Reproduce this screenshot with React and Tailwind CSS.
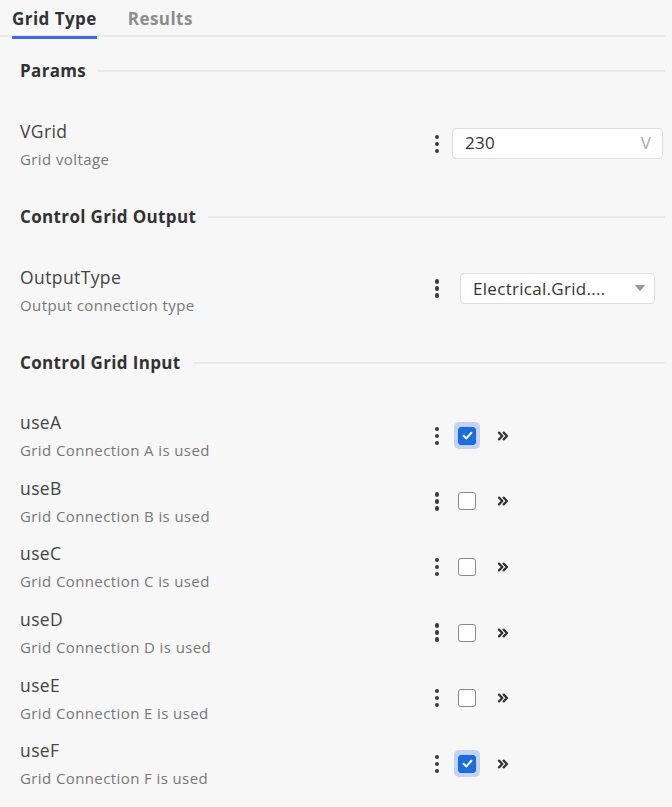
import React from 'react';
import { ChevronsRight } from 'lucide-react';

const font = { fontFamily: '"Open Sans", "Noto Sans", sans-serif' };

function Kebab() {
  return (
    <div className="flex w-[16px] flex-col items-center gap-[2.5px]">
      <span className="h-[4.5px] w-[4.5px] rounded-full bg-[#3d3d3d]" />
      <span className="h-[4.5px] w-[4.5px] rounded-full bg-[#3d3d3d]" />
      <span className="h-[4.5px] w-[4.5px] rounded-full bg-[#3d3d3d]" />
    </div>
  );
}

function SectionHeader({ title }) {
  return (
    <div className="flex h-[24px] items-center gap-[12px]">
      <span className="text-[17px] font-bold tracking-[0.35px] text-[#333]">{title}</span>
      <div className="h-[2px] flex-1 bg-[#e9e9e9]" />
    </div>
  );
}

function Label({ name, desc }) {
  return (
    <div className="flex flex-1 flex-col">
      <span className="text-[17.5px] leading-[22px] tracking-[0.4px] text-[#444]">{name}</span>
      <span className="mt-[7px] text-[15px] leading-[20px] tracking-[0.4px] text-[#777]">{desc}</span>
    </div>
  );
}

function Checkbox({ checked }) {
  if (checked) {
    return (
      <div className="flex h-[27px] w-[26px] items-center justify-center rounded-[5px] bg-[#c3d3fb]">
        <div className="flex h-[18px] w-[18px] items-center justify-center rounded-[3px] border border-[#1f66d1] bg-[#1a6fdd]">
          <svg viewBox="0 0 16 16" className="h-[13px] w-[13px]">
            <path d="M3.2 8.4 L6.6 11.6 L12.8 4.6" fill="none" stroke="white" strokeWidth="2.4" strokeLinecap="round" strokeLinejoin="round" />
          </svg>
        </div>
      </div>
    );
  }
  return (
    <div className="flex h-[27px] w-[26px] items-center justify-center">
      <div className="h-[18px] w-[18px] rounded-[3px] border-[1.5px] border-[#8a8a8a] bg-white" />
    </div>
  );
}

const inputs = [
  { name: 'useA', checked: true },
  { name: 'useB', checked: false },
  { name: 'useC', checked: false },
  { name: 'useD', checked: false },
  { name: 'useE', checked: false },
  { name: 'useF', checked: true },
];

export default function App() {
  return (
    <div className="min-h-[807px] w-[672px] bg-[#f7f7f7]" style={font}>
      <div className="relative mr-[7px] flex h-[37px] items-start gap-[31px] border-b-2 border-[#e9e9e9] pl-[12px] pt-[7px]">
        <div className="relative">
          <span className="text-[17px] font-bold leading-[24px] tracking-[0.45px] text-[#333]">Grid Type</span>
          <div className="absolute left-0 right-0 top-[29px] h-[3px] bg-[#4169e1]" />
        </div>
        <span className="text-[17px] font-bold leading-[24px] tracking-[0.45px] text-[#8c8c8c]">Results</span>
      </div>

      <div className="pl-[20px] pr-[7px] pt-[22px]">
        <SectionHeader title="Params" />
        <div className="mt-[28px] flex h-[66px] items-center">
          <Label name="VGrid" desc="Grid voltage" />
          <div className="flex w-[236px] items-center">
            <Kebab />
            <div className="ml-[7px] mr-[2px] flex h-[31px] flex-1 -translate-y-[1px] items-center justify-between rounded-[4px] border border-[#dcdcdc] bg-white pl-[12px] pr-[11px]">
              <span className="text-[17px] tracking-[0.3px] text-[#333]">230</span>
              <span className="text-[17px] text-[#aaa]">V</span>
            </div>
          </div>
        </div>

        <div className="mt-[28px]">
          <SectionHeader title="Control Grid Output" />
        </div>
        <div className="mt-[28px] flex h-[66px] items-center">
          <Label name="OutputType" desc="Output connection type" />
          <div className="flex w-[236px] items-center pb-[3px]">
            <Kebab />
            <div className="ml-[15px] mr-[10px] flex h-[31px] flex-1 items-center justify-between rounded-[4px] border border-[#dcdcdc] bg-white pl-[12px] pr-[8px]">
              <span className="text-[17px] tracking-[0.3px] text-[#333]">Electrical.Grid....</span>
              <svg viewBox="0 0 12 8" className="h-[7px] w-[12px]">
                <path d="M0 0 L12 0 L6 7 Z" fill="#999" />
              </svg>
            </div>
          </div>
        </div>

        <div className="mt-[28px]">
          <SectionHeader title="Control Grid Input" />
        </div>
        <div className="mt-[28px]">
          {inputs.map((r) => (
            <div key={r.name} className="flex h-[65.6px] items-center">
              <Label name={r.name} desc={`Grid Connection ${r.name.slice(3)} is used`} />
              <div className="flex w-[236px] items-center">
                <Kebab />
                <div className="ml-[9px]">
                  <Checkbox checked={r.checked} />
                </div>
                <ChevronsRight className="ml-[15px] h-[16px] w-[16px] text-[#333]" strokeWidth={3.4} />
              </div>
            </div>
          ))}
        </div>
      </div>
    </div>
  );
}
